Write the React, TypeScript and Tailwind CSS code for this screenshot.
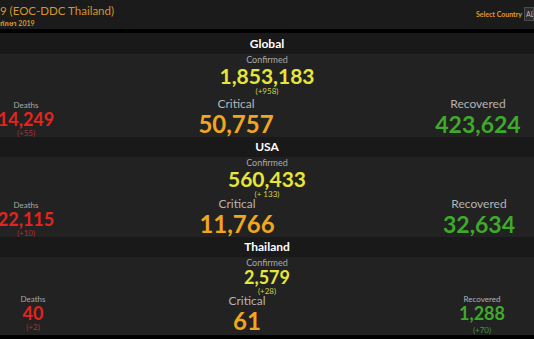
import React from "react";

type Stat = { value: string; delta?: string };

type Region = {
  name: string;
  confirmed: Stat;
  critical: Stat;
  deaths: Stat;
  recovered: Stat;
  cols: string;
  row: string;
  small?: boolean;
  contentH: string;
  bandH: string;
};

const regions: Region[] = [
  {
    name: "Global",
    confirmed: { value: "1,853,183", delta: "(+958)" },
    critical: { value: "50,757" },
    deaths: { value: "14,249", delta: "(+55)" },
    recovered: { value: "423,624" },
    cols: "grid-cols-[52px_124px_120px_126px_112px]",
    row: "",
    contentH: "h-[83px]",
    bandH: "h-[21px]",
  },
  {
    name: "USA",
    confirmed: { value: "560,433", delta: "(+ 133)" },
    critical: { value: "11,766" },
    deaths: { value: "22,115", delta: "(+10)" },
    recovered: { value: "32,634" },
    cols: "grid-cols-[52px_125px_120px_127px_110px]",
    row: "-mt-[3px]",
    contentH: "h-[80px]",
    bandH: "h-[20px]",
  },
  {
    name: "Thailand",
    confirmed: { value: "2,579", delta: "(+28)" },
    critical: { value: "61" },
    deaths: { value: "40", delta: "(+2)" },
    recovered: { value: "1,288", delta: "(+70)" },
    cols: "grid-cols-[66px_131px_100px_133px_104px]",
    row: "-mt-[2px]",
    small: true,
    contentH: "h-[78px]",
    bandH: "h-[20px]",
  },
];

const Section = ({ r }: { r: Region }) => (
  <div>
    <div className={`${r.bandH} bg-[#191919] flex items-center justify-center text-white font-bold text-[12px]`}>
      {r.name}
    </div>
    <div className={`${r.contentH} bg-[#222222] flex flex-col overflow-hidden`}>
      {/* confirmed, top middle */}
      <div className="flex flex-col items-center">
        <span className="text-[9px] leading-[11px] text-[#a9a9a9]">Confirmed</span>
        <span
          className={`${r.small ? "text-[18px] leading-[19px]" : "text-[21px] leading-[21px]"} font-bold text-[#e6e63a] whitespace-nowrap`}
        >
          {r.confirmed.value}
        </span>
        <span className={`text-[8px] ${r.small ? "leading-[9px]" : "leading-[11px]"} text-[#d4cf4a]`}>
          {r.confirmed.delta}
        </span>
      </div>

      {/* deaths / critical / recovered row */}
      <div className={`grid ${r.cols} ${r.row} items-start`}>
        <div className={`flex flex-col items-center ${r.small ? "" : "pt-[3px]"}`}>
          <span className="text-[8px] leading-[10px] text-[#a9a9a9]">Deaths</span>
          <span className="text-[18px] leading-[18px] font-bold text-[#e3241f] whitespace-nowrap">
            {r.deaths.value}
          </span>
          <span className="text-[8px] leading-[10px] text-[#a83232]">{r.deaths.delta}</span>
        </div>
        <div />
        <div className="flex flex-col items-center">
          <span className="text-[12px] leading-[14px] text-[#b4b4b4]">Critical</span>
          <span className="text-[24px] leading-[24px] font-bold text-[#f0a61e] mt-[1px] whitespace-nowrap">
            {r.critical.value}
          </span>
        </div>
        <div />
        <div className="flex flex-col items-center">
          <span
            className={`${r.small ? "text-[8px] leading-[10px]" : "text-[12px] leading-[14px]"} text-[#b4b4b4]`}
          >
            Recovered
          </span>
          <span
            className={`${r.small ? "text-[18px] leading-[18px]" : "text-[23px] leading-[24px] mt-[1px]"} font-bold text-[#3fa92c] whitespace-nowrap`}
          >
            {r.recovered.value}
          </span>
          {r.recovered.delta && (
            <span className="text-[8px] leading-[10px] mt-[3px] text-[#3a9a30]">{r.recovered.delta}</span>
          )}
        </div>
      </div>
    </div>
  </div>
);

export default function App() {
  return (
    <div className="w-[534px] h-[339px] overflow-hidden bg-black font-['Lato','Noto_Sans_Thai','Noto_Sans',sans-serif]">
      <div className="h-[29px] bg-[#1b1b1b] flex items-start justify-between">
        <div className="flex flex-col pt-[3px]">
          <span className="text-[11.5px] leading-[15px] text-[#d4962a] whitespace-nowrap">9 (EOC-DDC Thailand)</span>
          <span className="text-[7px] leading-[9px] font-bold text-[#d4962a] mt-[1px]">ทักษา 2019</span>
        </div>
        <div className="flex items-center gap-[2px] pt-[7px]">
          <span className="text-[7px] font-bold text-[#e09a2a] whitespace-nowrap">Select Country</span>
          <div className="w-[10px] h-[14px] bg-[#2c2c2c] border border-[#4a4a4a] text-[7px] leading-[12px] text-[#bbbbbb] pl-[1px] overflow-hidden">
            AL
          </div>
        </div>
      </div>
      <div className="h-[4px] bg-black" />
      {regions.map((r) => (
        <Section key={r.name} r={r} />
      ))}
    </div>
  );
}
